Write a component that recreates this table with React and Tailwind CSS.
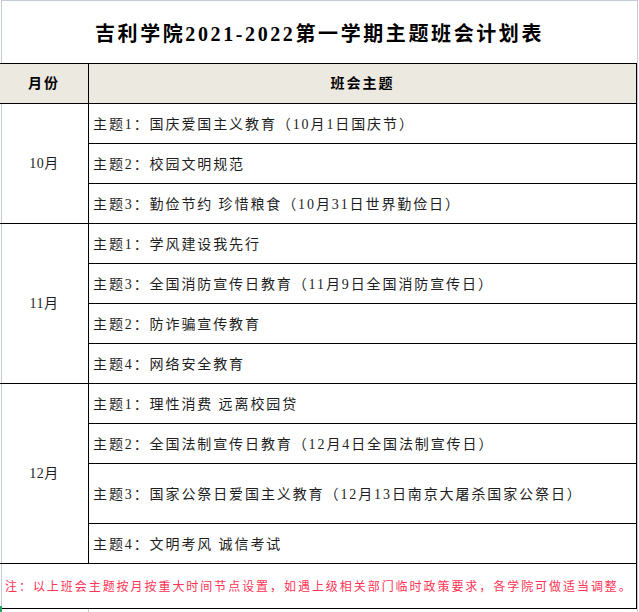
import React from "react";

const groups = [
  {
    month: "10月",
    rows: [
      { text: "主题1：国庆爱国主义教育（10月1日国庆节）", h: "h-[40px]" },
      { text: "主题2：校园文明规范", h: "h-[40px]" },
      { text: "主题3：勤俭节约 珍惜粮食（10月31日世界勤俭日）", h: "h-[40px]" },
    ],
  },
  {
    month: "11月",
    rows: [
      { text: "主题1：学风建设我先行", h: "h-[40px]" },
      { text: "主题3：全国消防宣传日教育（11月9日全国消防宣传日）", h: "h-[40px]" },
      { text: "主题2：防诈骗宣传教育", h: "h-[40px]" },
      { text: "主题4：网络安全教育", h: "h-[40px]" },
    ],
  },
  {
    month: "12月",
    rows: [
      { text: "主题1：理性消费 远离校园贷", h: "h-[40px]" },
      { text: "主题2：全国法制宣传日教育（12月4日全国法制宣传日）", h: "h-[40px]" },
      { text: "主题3：国家公祭日爱国主义教育（12月13日南京大屠杀国家公祭日）", h: "h-[60px]" },
      { text: "主题4：文明考风 诚信考试", h: "h-[40px]" },
    ],
  },
];

const serif = "font-['Liberation_Serif','Noto_Sans_CJK_SC',serif]";

export default function App() {
  return (
    <div className={`relative w-[639px] h-[612px] bg-white overflow-hidden ${serif}`}>
      <div className="ml-px w-[637px] h-full border-t border-l border-r border-[#c5cad8] flex flex-col">
        {/* title */}
        <div className="shrink-0 h-[62px] flex items-center justify-center pt-[4px]">
          <h1 className="text-[20px] font-bold tracking-[2.6px] text-black">
            吉利学院2021-2022第一学期主题班会计划表
          </h1>
        </div>

        <div className="shrink-0 -ml-[2px] border-t border-black">
          {/* header */}
          <div className="flex h-[40px] bg-[#ece9e0] border-b border-r border-black">
            <div className="w-[89px] border-r border-black flex items-center justify-center text-[14px] font-bold tracking-[2px] text-black">
              月份
            </div>
            <div className="flex-1 flex items-center justify-center text-[14px] font-bold tracking-[2px] text-black">
              班会主题
            </div>
          </div>

          {groups.map((g) => (
            <div key={g.month} className="flex border-r border-black">
              <div className="w-[89px] border-r border-b border-black flex items-center justify-center text-[14px] text-[#1e1e1e] tracking-[0.5px]">
                {g.month}
              </div>
              <div className="flex-1 flex flex-col">
                {g.rows.map((r, i) => (
                  <div
                    key={i}
                    className={`${r.h} border-b border-black flex items-center pl-[4px] pt-[2px] text-[14px] tracking-[1.9px] text-[#1e1e1e] whitespace-pre`}
                  >
                    {r.text}
                  </div>
                ))}
              </div>
            </div>
          ))}

          {/* note */}
          <div className="h-[45px] border-b border-r border-black flex items-center pl-[5px] pt-[2px] text-[12px] tracking-[1.95px] text-[#ff3355] whitespace-nowrap">
            注：以上班会主题按月按重大时间节点设置，如遇上级相关部门临时政策要求，各学院可做适当调整。
          </div>

          <div className="flex h-[10px]">
            <div className="w-[89px] border-r border-[#c5cad8]" />
          </div>
        </div>
      </div>
      <div className="absolute left-0 bottom-0 w-[2px] h-[6px] bg-[#21a366]" />
    </div>
  );
}
